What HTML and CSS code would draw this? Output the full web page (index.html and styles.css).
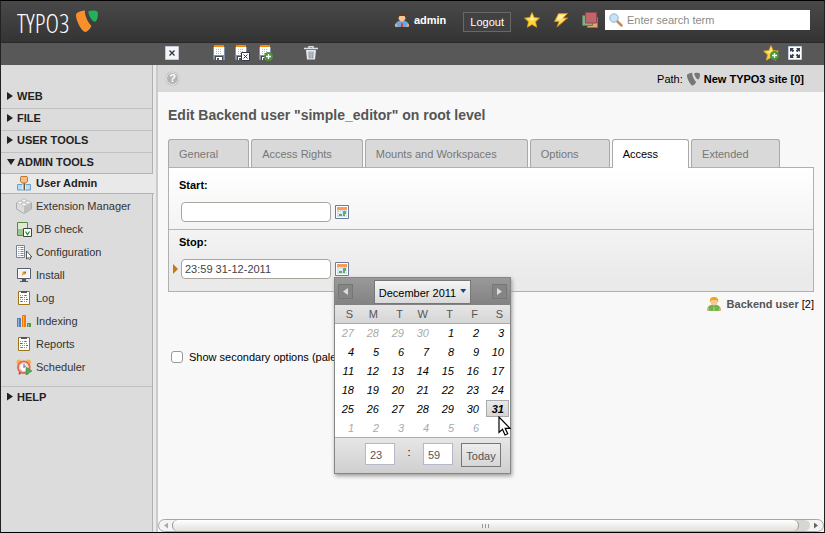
FILE: index.html
```html
<!DOCTYPE html>
<html lang="en">
<head>
<meta charset="utf-8">
<title>TYPO3 Backend</title>
<link rel="stylesheet" href="styles.css">
</head>
<body>
<svg class="defs" aria-hidden="true">
  <symbol id="save" viewBox="0 0 14 16">
    <path d="M1 2h12v13H2l-1-1z" fill="#8290aa"/><path d="M2 1h10v9H2z" fill="#fff"/><path d="M2 0h10v2H2z" fill="#ff8600"/>
    <path d="M4 4.500h6M4 6.500h6M4 8.500h6" stroke="#b3b8c0" stroke-dasharray="1 1"/><path d="M3 11h8v4H3z" fill="#3f4858"/><path d="M4 12h6v3H4z" fill="#fff"/><path d="M5 13h2v2H5z" fill="#555"/>
  </symbol>
  <symbol id="plus" viewBox="0 0 9 9"><circle cx="4.500" cy="4.500" r="4.500" fill="#4b9437"/><path d="M4.500 2v5M2 4.500h5" stroke="#fff" stroke-width="1.300"/></symbol>
  <symbol id="star" viewBox="0 0 16 16"><path d="M8 .5l2.200 5 5.300.6-4 3.700 1.200 5.500L8 12.500l-4.700 2.800 1.200-5.500-4-3.700 5.300-.6z" fill="#fcd338" stroke="#e0a21c" stroke-width=".7"/><path d="M8 2l1.500 4 3.500.6-5 2.400-5-2.400 3.500-.5z" fill="#ffea76"/></symbol>
  <symbol id="cal" viewBox="0 0 14 14"><path d="M.5.5h13v13H.5z" fill="#fff" stroke="#6b7b9b"/><path d="M2 2h10v3H2z" fill="#ff9b50"/><path d="M2 5h10v7H2z" fill="#c9daf0"/><path d="M2 7.500h10M2 9.500h10M4.500 5v7M6.500 5v7M8.500 5v7M10.500 5v7" stroke="#fff" stroke-width=".5"/><path d="M8 6h3v3H8zM4 9h3v2H4zM8 9h2v2H8z" fill="#61ad61"/></symbol>
  <symbol id="clip" viewBox="0 0 16 16"><path d="M2.500 1.500h11v13h-11z" fill="#fff" stroke="#9a7417"/><path d="M5 1h6v2H5z" fill="#555"/><path d="M4 5.500h8M4 7.500h8M4 9.500h8M4 11.500h8" stroke="#8c95ab" stroke-dasharray="1 1"/><path d="M9 5h1v1H9zM4 7h2v1H4zM10 9h2v1h-2zM5 11h1v1H5z" fill="#e32929"/></symbol>
  <symbol id="shield" viewBox="0 0 22 22"><path class="big" d="M1 3C3 1.500 6 .6 9 .5c-.7 4 2.500 11.500 6.500 15.500-2 3.500-4.300 6-6 6C5.500 22 0 10 0 5.500 0 4.300.3 3.500 1 3z"/><path class="small" d="M12.500 1.200c3.500-.9 7-1 8.700.2.800.7.800 2 .7 4-.3 3.500-2 7-3.700 6.200-2.700-1.300-6.300-7.200-5.700-10.400z"/></symbol>
  <symbol id="person" viewBox="0 0 16 16"><path d="M1.500 15v-3q1-3 5-3.500h3q4 .5 5 3.500v3z" fill="var(--shirt)"/><path d="M1 14.500q-.5-3 1.500-3l1 3.500zM15 14.500q.5-3-1.500-3l-1 3.500z" fill="#e8b07c"/><path d="M4.500 3.500Q8 0 11.500 3.500V7Q8 12 4.500 7z" fill="#f6c894"/><path d="M4 6.500q-1.200-5.500 4-5.500t4 5.500L10.500 4h-5z" fill="var(--hair)"/><path d="M7.300 11h1.400l.5 4H6.800z" fill="var(--tie)"/></symbol>
</svg>
<div class="frame">
  <header class="topbar">
    <div class="logo"><span>TYPO3</span><svg class="mark" width="22" height="22"><use href="#shield"/></svg></div>
    <div class="tools">
      <span class="user"><svg class="admin-face" width="16" height="16"><use href="#person"/></svg>admin</span>
      <button class="logout">Logout</button>
      <button class="icon" aria-label="Shortcuts"><svg width="16" height="16"><use href="#star"/></svg></button>
      <button class="icon" aria-label="Clear cache"><svg width="16" height="16" viewBox="0 0 16 16"><path d="M5.500 1.500h9L10 6h4.500L4 15l2-5.500H1.500z" fill="#ffdd66" stroke="#c98b22"/><path d="M6 3h6L8 7H4z" fill="#fff0a5"/></svg></button>
      <button class="icon" aria-label="Workspaces"><svg width="16" height="16" viewBox="0 0 16 16"><path d="M5.500 5.500h10v10h-10z" fill="#e8a46a" stroke="#a96a42"/><path d="M.5 3.500h10v10H.5z" fill="#86b083" stroke="#5d8060"/><path d="M3.500.5h11v10.500h-11z" fill="#c1656c" stroke="#91484e"/></svg></button>
      <label class="search"><svg width="14" height="14" viewBox="0 0 14 14"><path d="M8 8l4.500 4.500" stroke="#c98d52" stroke-width="2.500" stroke-linecap="round"/><circle cx="5" cy="5" r="4.200" fill="#c8e2fa" stroke="#91add2"/></svg><input type="text" placeholder="Enter search term" aria-label="Enter search term"></label>
    </div>
  </header>
  <div class="body">
    <nav class="sidebar">
      <div class="bar"></div>
      <ul class="modules">
        <li><a class="group" href="#"><i class="arrow"></i>WEB</a></li>
        <li><a class="group" href="#"><i class="arrow"></i>FILE</a></li>
        <li><a class="group" href="#"><i class="arrow"></i>USER TOOLS</a></li>
        <li><a class="group expanded" href="#"><i class="arrow open"></i>ADMIN TOOLS</a>
          <ul class="items">
            <li><a class="current" href="#"><svg width="16" height="16" viewBox="0 0 16 16"><path d="M1.500 15V9.500h13V15z" fill="#b8dcf8" stroke="#679fcd"/><path d="M6.500 9h3v6h-3z" fill="#fff"/><path d="M7.500 8h1.500v7H7.500z" fill="#865019"/><path d="M5 1.500h6l.5 1v4L10 8H6L4.500 6.500v-4z" fill="#f6bd85" stroke="#b77838"/></svg>User Admin</a></li>
            <li><a href="#"><svg width="16" height="16" viewBox="0 0 16 16"><path d="M.5 5L8 2l7.500 3v6L8 15.500.500 11z" fill="#ddd" stroke="#aaa"/><path d="M1 5l7 3.500L15 5 8 2z" fill="#f1f1f1"/><path d="M8 8.500L15 5v6l-7 4z" fill="#bfbfbf"/><g fill="#fafafa" stroke="#aaa" stroke-width=".7"><ellipse cx="8" cy="2.500" rx="2.300" ry="1.500"/><ellipse cx="4" cy="4.500" rx="2.300" ry="1.500"/><ellipse cx="12" cy="4.500" rx="2.300" ry="1.500"/><ellipse cx="8" cy="6.500" rx="2.300" ry="1.500"/></g></svg>Extension Manager</a></li>
            <li><a href="#"><svg width="16" height="16" viewBox="0 0 16 16"><path d="M1.500 1.500h10v13h-10z" fill="#dcecd0" stroke="#568a3d"/><path d="M2 8h9v6H2z" fill="#9cc58e"/><path d="M7.500 7.500h8v8h-8z" fill="#fff" stroke="#444"/><path d="M9.500 10.500l2 3 2-3" fill="none" stroke="#179a22" stroke-width="1.300"/></svg>DB check</a></li>
            <li><a href="#"><svg width="16" height="16" viewBox="0 0 16 16"><path d="M.5 1.500h8v12h-8z" fill="#fff" stroke="#75849b"/><path d="M2 3.500h1.500M2 5.500h1.500M2 7.500h1.500M2 9.500h1.500M2 11.500h1.500" stroke="#e3a43c"/><path d="M4.500 3.500h3M4.500 5.500h3M4.500 7.500h3M4.500 9.500h3M4.500 11.500h3" stroke="#76839b"/><path d="M10.500 7v8l1.800-1.500.9 2 1.500-.7-.8-1.800h2z" fill="#fff" stroke="#333" stroke-width=".8"/></svg>Configuration</a></li>
            <li><a href="#"><svg width="16" height="16" viewBox="0 0 16 16"><path d="M1.500 1.500h13v10h-13z" fill="#fff" stroke="#555e6e"/><path d="M3 3h10v7H3z" fill="#f0f4f7"/><path d="M6 12h4v2h2v1H4v-1h2z" fill="#4f5868"/><path d="M6 5l4-1-1 4-1-1-2 2V7l1-1z" fill="#f98c1c"/><path d="M8 5h2v2z" fill="#339a51"/></svg>Install</a></li>
            <li><a href="#"><svg width="16" height="16"><use href="#clip"/></svg>Log</a></li>
            <li><a href="#"><svg width="16" height="16" viewBox="0 0 16 16"><path d="M1 5h4v9H1z" fill="#4a82c3"/><path d="M2 6h1v8H2z" fill="#8eb6e1"/><path d="M6 2h4v12H6z" fill="#f57d05"/><path d="M7 3h1v11H7z" fill="#ffb04b"/><path d="M11 10h4v4h-4z" fill="#4f9c48"/><path d="M12 11h1v3h-1z" fill="#8bc583"/></svg>Indexing</a></li>
            <li><a href="#"><svg width="16" height="16"><use href="#clip"/></svg>Reports</a></li>
            <li><a href="#"><svg width="16" height="16" viewBox="0 0 16 16"><circle cx="3" cy="3" r="2.500" fill="#f4b33e"/><circle cx="12.500" cy="3" r="2.500" fill="#f4b33e"/><path d="M3 15l2-2M12 15l-2-2" stroke="#b54134" stroke-width="2"/><circle cx="7.800" cy="8.200" r="5.800" fill="#fff" stroke="#e5695b" stroke-width="2"/><circle cx="7.800" cy="8.200" r="4.200" fill="#fff" stroke="#f4b8ae"/><path d="M8 5v3.500l2-2" fill="none" stroke="#555"/><path d="M10 8l6 4-6 4z" fill="#55a957" stroke="#2f8139" stroke-width=".5"/></svg>Scheduler</a></li>
          </ul>
        </li>
        <li><a class="group" href="#"><i class="arrow"></i>HELP</a></li>
      </ul>
    </nav>
    <div class="splitter"></div>
    <main class="main">
      <div class="bar docbar">
        <button class="icon close" aria-label="Close"><svg width="14" height="14" viewBox="0 0 14 14"><path d="M.5.5h13v13H.5z" fill="#f4f5f8" stroke="#c5cad6"/><path d="M4.500 4.500l5 5M9.500 4.500l-5 5" stroke="#303744" stroke-width="1.300"/></svg></button>
        <button class="icon" aria-label="Save"><svg width="14" height="16"><use href="#save"/></svg></button>
        <button class="icon" aria-label="Save and close"><svg width="16" height="16"><use href="#save" width="14" height="16"/><path d="M7.500 7.500h8v8h-8z" fill="#fff" stroke="#323845"/><path d="M9.500 9.500l4 4M13.500 9.500l-4 4" stroke="#323845"/></svg></button>
        <button class="icon" aria-label="Save and create new"><svg width="16" height="16"><use href="#save" width="14" height="16"/><use href="#plus" x="6" y="7" width="9" height="9"/></svg></button>
        <button class="icon trash" aria-label="Delete"><svg width="14" height="14" viewBox="0 0 14 14"><path d="M5 2V.5h4V2M0 2.500h14" fill="none" stroke="#dce1e7" stroke-width="1.500"/><path d="M2 4h10l-1 9.500H3z" fill="#e5e9ee"/><path d="M5 5.500l.3 7M7 5.500v7M9 5.500l-.3 7" stroke="#7c8490"/></svg></button>
        <span class="spring"></span>
        <button class="icon" aria-label="Add bookmark"><svg width="17" height="16"><use href="#star" width="16" height="16"/><use href="#plus" x="7" y="6" width="9" height="9"/></svg></button>
        <button class="icon" aria-label="Open in new window"><svg width="14" height="14" viewBox="0 0 14 14"><path d="M.5.5h13v13H.5z" fill="#fff" stroke="#c5cede"/><path d="M2 2h4L4.800 3.200l1.500 1.500-1.600 1.600-1.500-1.500L2 6zM12 2v4l-1.200-1.200-1.500 1.500-1.600-1.600 1.500-1.500L8 2zM2 12V8l1.200 1.200 1.500-1.500 1.600 1.600-1.500 1.500L6 12zM12 12H8l1.200-1.200-1.500-1.500 1.600-1.600 1.500 1.500L12 8z" fill="#39414e"/></svg></button>
      </div>
      <div class="pathbar">
        <button class="help" aria-label="Help">?</button>
        <span class="path">Path:<svg class="gray-mark" width="13" height="14"><use href="#shield"/></svg><b>New TYPO3 site [0]</b></span>
      </div>
      <div class="content">
        <h1>Edit Backend user "simple_editor" on root level</h1>
        <div class="tabs" role="tablist">
          <button role="tab">General</button><button role="tab">Access Rights</button><button role="tab">Mounts and Workspaces</button><button role="tab">Options</button><button role="tab" class="active" aria-selected="true">Access</button><button role="tab">Extended</button>
        </div>
        <form class="panel">
          <div class="field">
            <label for="start">Start:</label>
            <div class="row"><i class="changed off"></i><input id="start" type="text"><button type="button" class="icon" aria-label="Pick start date"><svg width="14" height="14"><use href="#cal"/></svg></button></div>
          </div>
          <div class="field second">
            <label for="stop">Stop:</label>
            <div class="row"><i class="changed"></i><input id="stop" type="text" value="23:59 31-12-2011">
              <div class="picker"><button type="button" class="icon" aria-label="Pick stop date"><svg width="14" height="14"><use href="#cal"/></svg></button>
                <div class="calendar">
                  <div class="cal-head"><button type="button" class="step prev" aria-label="Previous month"></button><button type="button" class="month">December 2011<i></i></button><button type="button" class="step next" aria-label="Next month"></button></div>
                  <table>
                    <thead><tr><th>S</th><th>M</th><th>T</th><th>W</th><th>T</th><th>F</th><th>S</th></tr></thead>
                    <tbody>
                      <tr><td class="out">27</td><td class="out">28</td><td class="out">29</td><td class="out">30</td><td>1</td><td>2</td><td>3</td></tr>
                      <tr><td>4</td><td>5</td><td>6</td><td>7</td><td>8</td><td>9</td><td>10</td></tr>
                      <tr><td>11</td><td>12</td><td>13</td><td>14</td><td>15</td><td>16</td><td>17</td></tr>
                      <tr><td>18</td><td>19</td><td>20</td><td>21</td><td>22</td><td>23</td><td>24</td></tr>
                      <tr><td>25</td><td>26</td><td>27</td><td>28</td><td>29</td><td>30</td><td class="chosen"><span>31</span><svg class="pointer" width="13" height="20" viewBox="0 0 13 20"><path d="M1 1v15.500l3.500-3.200 2.500 5.700 2.700-1.200-2.500-5.500H12z" fill="#fff" stroke="#000" stroke-width="1.200"/></svg></td></tr>
                      <tr><td class="out">1</td><td class="out">2</td><td class="out">3</td><td class="out">4</td><td class="out">5</td><td class="out">6</td><td></td></tr>
                    </tbody>
                  </table>
                  <div class="cal-foot"><input type="text" value="23" aria-label="Hour"><span>:</span><input type="text" value="59" aria-label="Minute"><button type="button">Today</button></div>
                </div>
              </div>
            </div>
          </div>
        </form>
        <p class="record"><svg class="be-face" width="16" height="16"><use href="#person"/></svg><b>Backend user</b> [2]</p>
        <label class="secondary"><input type="checkbox">Show secondary options (pale</label>
      </div>
      <div class="scroll"><i class="end left"></i><div class="track"><div class="thumb"><i></i><i></i><i></i></div></div><i class="end right"></i></div>
    </main>
  </div>
</div>
</body>
</html>
```
FILE: styles.css
```css
* { box-sizing: border-box; }
body, h1, ul, p { margin: 0; padding: 0; }
ul { list-style: none; }
body, button, input { font: 11px/14px "Liberation Sans", Arial, sans-serif; }
body { color: #000; background: #f8f8f8; }
button { margin: 0; padding: 0; border: 0; background: none; }
svg { display: block; flex: none; }
a { color: inherit; text-decoration: none; }
.defs { position: absolute; width: 0; height: 0; }
.icon { display: flex; flex: none; }

.frame { display: flex; flex-direction: column; min-height: 100vh; border: 1px solid #000; border-left-color: #222; border-right-color: #222; }

.topbar { display: flex; justify-content: space-between; height: 42px; padding: 0 14px 0 16px; background: linear-gradient(#494949, #343434); border-bottom: 1px solid #292929; }
.logo { display: flex; gap: 7px; padding-top: 9px; color: #fff; }
.logo span { font: 300 26px/26px "Open Sans Condensed Light", "Open Sans Condensed", "Liberation Sans Narrow", "Liberation Sans", sans-serif; }
.mark { fill: #f7902b; --leaf: #21b25b; }
#shield .small { fill: var(--leaf); }
.gray-mark { fill: #777; --leaf: #777; }
.tools { display: flex; align-items: center; gap: 13px; padding-bottom: 3px; }
.user { display: flex; align-items: center; gap: 4px; margin-right: 4px; color: #fff; font-weight: bold; }
.admin-face { --shirt: #6fa7dd; --hair: #633519; --tie: #cc3d35; }
.be-face { --shirt: #70b34c; --hair: #efa51e; --tie: #91cc6c; }
.logout { height: 20px; margin-top: 4px; padding: 0 6px; color: #fff; border: 1px solid #686868; background: #414141; }
.search { display: flex; align-items: center; gap: 4px; width: 205px; height: 20px; margin-left: -6px; padding: 0 4px; background: #fff; }
.search input { flex: 1; min-width: 0; padding: 0; border: 0; outline: 0; background: none; }
.search input::placeholder { color: #8b8b8b; opacity: 1; }

.body { display: flex; flex: 1; }
.bar { height: 22px; background: #585858; }
.sidebar { display: flex; flex-direction: column; width: 151px; background: #dcdcdc; }
.modules { flex: 1; padding-top: 22px; }
.group { display: flex; align-items: center; gap: 4px; height: 22px; padding: 0 0 3px 6px; color: #222; font-weight: bold; border-bottom: 1px solid #c1c1c1; }
.group.expanded { height: 21px; padding-bottom: 2px; border-bottom-color: #b4b4b4; }
.modules > li:last-child .group { margin-top: 8px; padding-bottom: 2px; border-top: 1px solid #c1c1c1; border-bottom: 0; }
.arrow { width: 6px; height: 8px; background: #222; clip-path: polygon(0 0, 100% 50%, 0 100%); }
.arrow.open { width: 8px; height: 6px; margin-right: -2px; clip-path: polygon(0 0, 100% 0, 50% 100%); }
.items a { display: flex; align-items: center; gap: 4px; height: 23px; padding-left: 15px; color: #333; }
.items .current { position: relative; height: 20px; margin-right: -2px; padding-bottom: 2px; color: #222; font-weight: bold; background: #e9e9e9; border-bottom: 1px solid #b4b4b4; }

.splitter { width: 6px; background: linear-gradient(#585858, #585858) top / 100% 22px no-repeat, linear-gradient(90deg, #b1b1b1 1px, #e9e9e9 1px 4px, #cbcbcb 4px); }

.main { display: flex; flex: 1; flex-direction: column; min-width: 0; background: #f8f8f8; }
.docbar { display: flex; align-items: center; gap: 8px; padding: 0 22px 2px 7px; }
.close { margin-right: 25px; }
.trash { margin-left: 22px; }
.spring { flex: 1; }
.pathbar { display: flex; align-items: center; justify-content: space-between; height: 27px; padding: 0 20px 0 8px; background: #d9d9d9; }
.help { width: 13px; height: 13px; color: #fff; font-weight: bold; line-height: 11px; border: 1px solid #eee; border-radius: 50%; background: #b4b4b4; box-shadow: 0 0 1px #777; }
.path { display: flex; align-items: center; gap: 4px; }
.content { flex: 1; padding: 14px 10px 0; }
h1 { color: #555; font-size: 14px; line-height: 18px; }

.tabs { display: flex; gap: 2px; margin-top: 15px; }
.tabs button { height: 28px; padding: 0 30px 0 10px; color: #777; background: #d9d9d9; border: 1px solid #a9a9a9; border-bottom: 0; border-radius: 3px 3px 0 0; }
.tabs .active { position: relative; height: 29px; margin-bottom: -1px; color: #000; background: #fff; }
.panel { border: 1px solid #b0b0b0; background: linear-gradient(#fff, #eaeaea 90%); }
.field { height: 61px; padding: 10px 4px 0; }
.field.second { height: 62px; padding-top: 5px; border-top: 1px solid #b5b5b5; }
.field label { display: block; padding-left: 6px; font-weight: bold; line-height: 14px; }
.row { display: flex; align-items: center; margin-top: 10px; }
.row > input { width: 150px; height: 20px; margin-right: 4px; padding: 0 3px; color: #444; border: 1px solid #aaa69e; border-radius: 4px; background: #fff; }
.changed { width: 5px; height: 10px; margin-right: 3px; background: #c17a16; clip-path: polygon(0 0, 100% 50%, 0 100%); }
.off { visibility: hidden; }
.picker { position: relative; }

.calendar { position: absolute; z-index: 2; top: 15px; left: -1px; width: 177px; border: 1px solid #868686; background: #fff; box-shadow: 1px 2px 4px #999; }
.cal-head { display: flex; align-items: center; justify-content: space-between; height: 27px; padding: 0 3px; background: linear-gradient(#999, #828282); }
.step { width: 15px; height: 15px; border: 1px solid #777; background: #858585; }
.step::before { content: ""; display: block; width: 5px; height: 7px; margin: auto; background: #ddd; clip-path: polygon(0 0, 100% 50%, 0 100%); }
.prev::before { clip-path: polygon(100% 0, 0 50%, 100% 100%); }
.month { display: flex; align-items: center; gap: 4px; height: 24px; padding: 2px 4px 0; border: 1px solid #777; background: linear-gradient(#f5f5f5, #d9d9d9); }
.month i { width: 6px; height: 4px; margin-bottom: 3px; background: #15428b; clip-path: polygon(0 0, 100% 0, 50% 100%); }
.calendar table { width: 100%; table-layout: fixed; border-collapse: collapse; }
.calendar th { height: 18px; padding: 0 7px 0 0; color: #555; font-weight: normal; text-align: right; border-bottom: 1px solid #a3adbd; background: linear-gradient(#e6e6e6, #d5d5d5); }
.calendar td { height: 19px; padding: 0 6px 0 0; font-style: italic; text-align: right; }
.calendar .out { color: #aaa; }
.calendar .chosen { position: relative; padding: 0 1px; font-weight: bold; }
.chosen span { display: block; height: 17px; padding-right: 4px; line-height: 16px; border: 1px solid #aaa; background: linear-gradient(#e9e9e9, #d5d5d5); }
.pointer { position: absolute; z-index: 3; top: 17px; left: 13px; }
.cal-foot { display: flex; gap: 8px; height: 36px; padding: 5px 0 0 30px; border-top: 1px solid #a3adbd; background: linear-gradient(#e6e6e6, #cfcfcf); }
.cal-foot input { width: 30px; height: 22px; padding: 2px 4px 0; color: #555; border: 1px solid #b5b8c8; background: #fff; }
.cal-foot span { width: 12px; padding-top: 2px; text-align: center; }
.cal-foot button { width: 40px; height: 24px; padding-top: 2px; color: #555; border: 1px solid #777; background: linear-gradient(#eee, #d6d6d6); }

.record { display: flex; align-items: center; justify-content: flex-end; gap: 3px; margin-top: 4px; }
.record b { margin-left: 2px; color: #555; }
.secondary { display: inline-flex; align-items: center; gap: 6px; margin: 38px 0 0 3px; }
.secondary input { appearance: none; width: 12px; height: 12px; margin: 0; border: 1px solid #999; border-radius: 3px; background: #fff; }

.scroll { display: flex; align-items: center; height: 13px; padding: 0 1px; border: 1px solid #aaa69f; border-radius: 7px; background: #f4f4f4; }
.end { width: 4px; height: 6px; margin: 0 4px; background: #aaa; clip-path: polygon(100% 0, 0 50%, 100% 100%); }
.end.right { background: #666; clip-path: polygon(0 0, 100% 50%, 0 100%); }
.track { flex: 1; padding-right: 11px; border-radius: 7px; background: #d8d6d2; }
.thumb { display: flex; align-items: center; justify-content: center; gap: 2px; height: 11px; border: solid #9b9790; border-width: 0 1px; border-radius: 7px; background: linear-gradient(#fff, #e2e0dd); }
.thumb i { width: 1px; height: 4px; background: #999; }
```
